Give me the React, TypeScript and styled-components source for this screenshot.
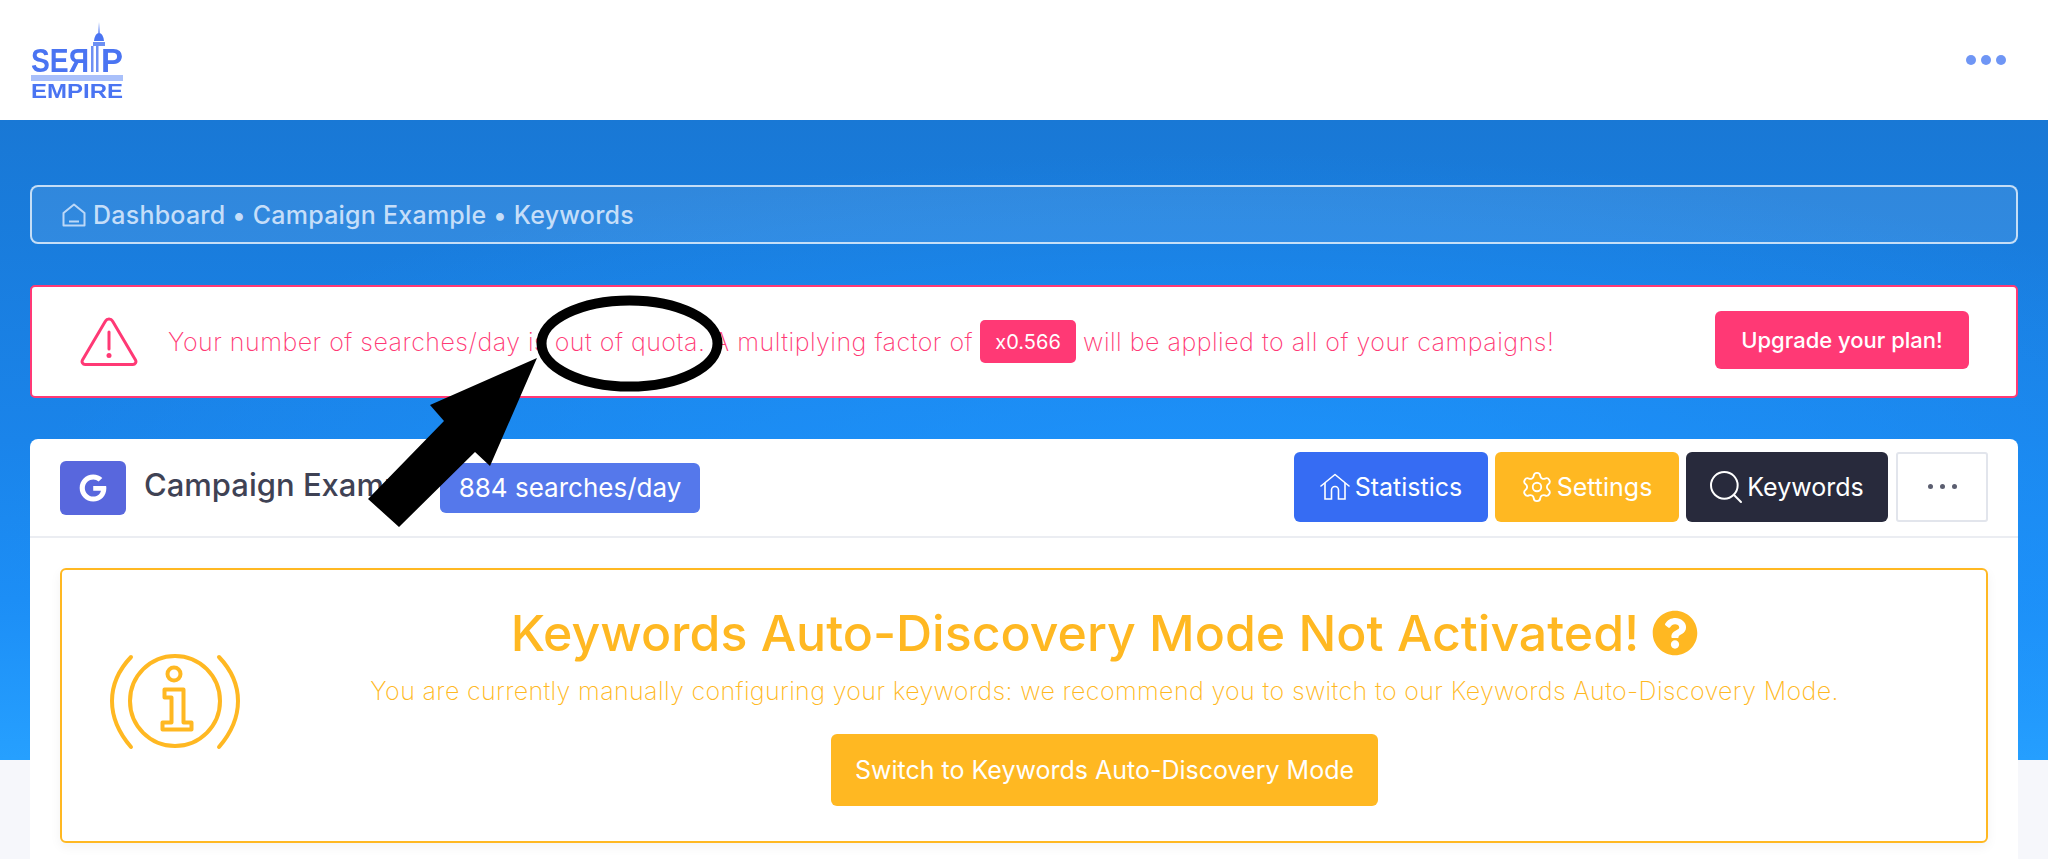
import React from 'react';
import styled, { createGlobalStyle } from 'styled-components';
import { Search, Settings } from 'lucide-react';
import { FaGoogle, FaQuestionCircle } from 'react-icons/fa';

const colors = {
  pink: '#ff3975',
  amber: '#ffb822',
  blue: '#366cf3',
  dark: '#282a3c',
  indigo: '#5867dd',
  periwinkle: '#5578eb',
  text: '#3f4254',
};

const GlobalStyle = createGlobalStyle`
  html, body {
    margin: 0;
    padding: 0;
    overflow: hidden;
  }
  * {
    box-sizing: border-box;
  }
  body {
    font-family: Inter, "Open Sans", sans-serif;
  }
`;

const Page = styled.div`
  position: relative;
  height: 859px;
  overflow: hidden;
  background-color: #f6f7fb;
  background-image:
    radial-gradient(ellipse 60% 60% at 60% 65%, rgba(30, 150, 255, 0.9), rgba(30, 150, 255, 0)),
    linear-gradient(180deg, #1978d5 0%, #1a84ea 50%, #1c8ef6 75%, #26a0ff 100%);
  background-repeat: no-repeat;
  background-position: 0 120px;
  background-size: 100% 640px;
`;

const Header = styled.header`
  height: 120px;
  background: #fff;
  display: flex;
  align-items: center;
  justify-content: space-between;
  padding: 0 42px 0 30px;
`;

const LogoSvg = styled.svg`
  width: 96px;
  height: 84px;
  overflow: visible;
  filter: blur(0.5px);
  font-family: "Liberation Sans", sans-serif;
`;

const DotsRow = styled.div<{ $size: number; $gap: number; $color: string }>`
  display: flex;
  gap: ${(p) => p.$gap}px;
  span {
    width: ${(p) => p.$size}px;
    height: ${(p) => p.$size}px;
    border-radius: 50%;
    background: ${(p) => p.$color};
  }
`;

const Content = styled.main`
  padding: 65px 30px 0;
  display: flex;
  flex-direction: column;
  gap: 41px;
`;

const Breadcrumb = styled.nav`
  height: 59px;
  display: flex;
  align-items: center;
  gap: 7px;
  padding-left: 30px;
  border: 2px solid rgba(255, 255, 255, 0.72);
  border-radius: 8px;
  background: rgba(255, 255, 255, 0.1);
  color: #c5def9;
  font-size: 25px;
  letter-spacing: 0.23px;
  font-weight: 500;
`;

const AlertBox = styled.section`
  height: 113px;
  display: flex;
  align-items: center;
  padding: 0 47px 0 48px;
  border: 2px solid ${colors.pink};
  border-radius: 5px;
  background: #fff;
  color: ${colors.pink};
`;

const AlertText = styled.div`
  flex: 1;
  margin-left: 30px;
  display: flex;
  align-items: center;
  gap: 7px;
  font-size: 25px;
  letter-spacing: 0.5px;
  font-weight: 250;
  white-space: nowrap;
`;

const Rate = styled.span`
  width: 96px;
  height: 43px;
  display: inline-flex;
  align-items: center;
  justify-content: center;
  border-radius: 5px;
  background: ${colors.pink};
  color: #fff;
  font-size: 20px;
  letter-spacing: 0;
  font-weight: 400;
`;

const Button = styled.button<{ $bg: string; $width: number; $height: number }>`
  width: ${(p) => p.$width}px;
  height: ${(p) => p.$height}px;
  display: inline-flex;
  align-items: center;
  justify-content: center;
  gap: 5px;
  padding: 0;
  border: 0;
  border-radius: 6px;
  background: ${(p) => p.$bg};
  color: #fff;
  font-family: inherit;
  font-size: 25px;
  font-weight: 400;
  white-space: nowrap;
`;

const UpgradeButton = styled(Button)`
  margin-top: -4px;
  font-size: 22px;
  font-weight: 500;
`;

const MoreButton = styled.button`
  width: 92px;
  height: 70px;
  margin-left: 1px;
  display: inline-flex;
  align-items: center;
  justify-content: center;
  padding: 0;
  background: #fff;
  border: 2px solid #e2e5ec;
  border-radius: 3px;
`;

const GearIcon = styled(Settings)`
  margin: 0 -2px;
`;

const SearchIcon = styled(Search)`
  margin: 0 -4px;
`;

const Card = styled.section`
  background: #fff;
  border-radius: 8px;
`;

const CardHead = styled.div`
  height: 99px;
  display: flex;
  align-items: center;
  justify-content: space-between;
  padding: 0 30px;
  border-bottom: 2px solid #ebedf2;
`;

const CampaignInfo = styled.div`
  display: flex;
  align-items: center;
`;

const Brand = styled.div`
  width: 66px;
  height: 54px;
  display: flex;
  align-items: center;
  justify-content: center;
  border-radius: 6px;
  background: ${colors.indigo};
  color: #fff;
  font-size: 28px;
`;

const CampaignName = styled.h2`
  margin: -6px 0 0 18px;
  width: 296px;
  color: ${colors.text};
  font-size: 31px;
  font-weight: 500;
  white-space: nowrap;
`;

const Badge = styled.span`
  width: 260px;
  height: 50px;
  display: inline-flex;
  align-items: center;
  justify-content: center;
  border-radius: 6px;
  background: ${colors.periwinkle};
  color: #fff;
  font-size: 26px;
  font-weight: 400;
`;

const Actions = styled.div`
  display: flex;
  gap: 7px;
  margin-top: -2px;
`;

const CardBody = styled.div`
  padding: 30px;
`;

const NoticeBox = styled.div`
  height: 275px;
  display: flex;
  align-items: center;
  padding: 0 37px 0 38px;
  border: 2px solid ${colors.amber};
  border-radius: 6px;
  background: #fff;
  box-shadow: 0 4px 12px rgba(0, 0, 0, 0.05);
  color: ${colors.amber};
`;

const NoticeIcon = styled.svg`
  flex: none;
  width: 160px;
  height: 120px;
  margin-bottom: 10px;
`;

const NoticeMain = styled.div`
  flex: 1;
  display: flex;
  flex-direction: column;
  align-items: center;
  margin-top: -2px;
`;

const NoticeTitle = styled.h1`
  margin: 0;
  display: flex;
  align-items: center;
  gap: 13px;
  font-size: 50px;
  line-height: 60px;
  font-weight: 500;
  white-space: nowrap;
  svg {
    flex: none;
    font-size: 46px;
  }
`;

const NoticeText = styled.p`
  margin: 12px 0 27px;
  font-size: 25px;
  letter-spacing: 0.37px;
  line-height: 32px;
  font-weight: 250;
  white-space: nowrap;
`;

const Annotation = styled.svg`
  position: absolute;
  top: 0;
  left: 0;
  width: 2048px;
  height: 859px;
  pointer-events: none;
`;

const Logo = () => (
  <LogoSvg viewBox="30 18 96 84">
    <text x="31" y="72" fontSize="34" fontWeight="700" fill="#4a74f2" textLength="58" lengthAdjust="spacingAndGlyphs">
      SEЯ
    </text>
    <text x="101" y="72" fontSize="34" fontWeight="700" fill="#4a74f2" textLength="22" lengthAdjust="spacingAndGlyphs">
      P
    </text>
    <path d="M99 22 L100 38 H98 Z M94 41 Q95 33 99 33 Q103 33 104 41 Z" fill="#4a74f2" />
    <path d="M93 42 H105 V46 H93 Z M91 46 H93.500 V72 H91 Z M96 46 H98.500 V72 H96 Z" fill="#6d90f3" />
    <rect x="31" y="75" width="92" height="6" fill="#a9c0fa" />
    <text x="31" y="98" fontSize="20" fontWeight="700" fill="#4a74f2" textLength="92" lengthAdjust="spacingAndGlyphs">
      EMPIRE
    </text>
  </LogoSvg>
);

const BreadcrumbHome = () => (
  <svg width="24" height="24" viewBox="0 0 24 24" fill="none" stroke="#bcd8f7" strokeWidth="2">
    <path d="M1.500 10 L12 1.500 L22.500 10 V22.500 H1.500 Z" strokeLinejoin="round" />
    <path d="M7 18.500 H17" />
  </svg>
);

const AlertTriangle = () => (
  <svg width="58" height="50" viewBox="0 0 58 50" fill="none" stroke={colors.pink} strokeWidth="3" style={{ flex: 'none' }}>
    <path d="M25.500 4 L2.500 43 a3 3 0 0 0 2.600 4.500 H52.900 a3 3 0 0 0 2.600 -4.500 L32.500 4 a4 4 0 0 0 -7 0 Z" strokeLinejoin="round" />
    <path d="M29 15 V32" strokeLinecap="round" />
    <circle cx="29" cy="38.500" r="2.500" fill={colors.pink} stroke="none" />
  </svg>
);

const HomeIcon = () => (
  <svg width="30" height="27" viewBox="0 0 30 27" fill="none" stroke="#fff" strokeWidth="1.600">
    <path d="M1 13 L15 1.500 L29 13" strokeLinecap="round" strokeLinejoin="round" />
    <path d="M5 10 V26 H11.500 V17 a3.500 3.500 0 0 1 7 0 V26 H25 V10" />
  </svg>
);

const InfoIcon = () => (
  <NoticeIcon viewBox="0 0 160 120" fill="none" stroke={colors.amber} strokeWidth="4">
    <circle cx="75" cy="60" r="45" />
    <circle cx="74" cy="33" r="6.500" />
    <path d="M64.500 48.500 H83.500 V81.500 H91.500 V88.500 H62.500 V81.500 H71.500 V56.500 H64.500 Z" strokeLinejoin="round" />
    <path d="M31 16 Q12 36 12 60 Q12 84 31 106" strokeLinecap="round" />
    <path d="M119 16 Q138 36 138 60 Q138 84 119 106" strokeLinecap="round" />
  </NoticeIcon>
);

const Dots = ({ size, gap, color }: { size: number; gap: number; color: string }) => (
  <DotsRow $size={size} $gap={gap} $color={color}>
    <span />
    <span />
    <span />
  </DotsRow>
);

const App: React.FC = () => {
  return (
    <Page>
      <GlobalStyle />
      <Header>
        <Logo />
        <Dots size={10} gap={5} color="#6f96f5" />
      </Header>

      <Content>
        <Breadcrumb>
          <BreadcrumbHome />
          Dashboard • Campaign Example • Keywords
        </Breadcrumb>

        <AlertBox>
          <AlertTriangle />
          <AlertText>
            Your number of searches/day is out of quota. A multiplying factor of
            <Rate>x0.566</Rate>
            will be applied to all of your campaigns!
          </AlertText>
          <UpgradeButton $bg={colors.pink} $width={254} $height={58}>
            Upgrade your plan!
          </UpgradeButton>
        </AlertBox>

        <Card>
          <CardHead>
            <CampaignInfo>
              <Brand>
                <FaGoogle />
              </Brand>
              <CampaignName>Campaign Example</CampaignName>
              <Badge>884 searches/day</Badge>
            </CampaignInfo>
            <Actions>
              <Button $bg={colors.blue} $width={194} $height={70}>
                <HomeIcon />
                Statistics
              </Button>
              <Button $bg={colors.amber} $width={184} $height={70}>
                <GearIcon size={34} strokeWidth={1.3} />
                Settings
              </Button>
              <Button $bg={colors.dark} $width={202} $height={70}>
                <SearchIcon size={40} strokeWidth={1.2} />
                Keywords
              </Button>
              <MoreButton>
                <Dots size={5} gap={7} color="#5b5e70" />
              </MoreButton>
            </Actions>
          </CardHead>

          <CardBody>
            <NoticeBox>
              <InfoIcon />
              <NoticeMain>
                <NoticeTitle>
                  Keywords Auto-Discovery Mode Not Activated!
                  <FaQuestionCircle />
                </NoticeTitle>
                <NoticeText>
                  You are currently manually configuring your keywords: we recommend you to switch to our Keywords Auto-Discovery Mode.
                </NoticeText>
                <Button $bg={colors.amber} $width={547} $height={72}>
                  Switch to Keywords Auto-Discovery Mode
                </Button>
              </NoticeMain>
            </NoticeBox>
          </CardBody>
        </Card>
      </Content>

      <Annotation viewBox="0 0 2048 859">
        <ellipse cx="629.500" cy="343.500" rx="88" ry="43" fill="none" stroke="#000" strokeWidth="10" />
        <polygon points="537,358 430,405 444,421 368,499 399,527 475,452 490,466" fill="#000" />
      </Annotation>
    </Page>
  );
};

export default App;
